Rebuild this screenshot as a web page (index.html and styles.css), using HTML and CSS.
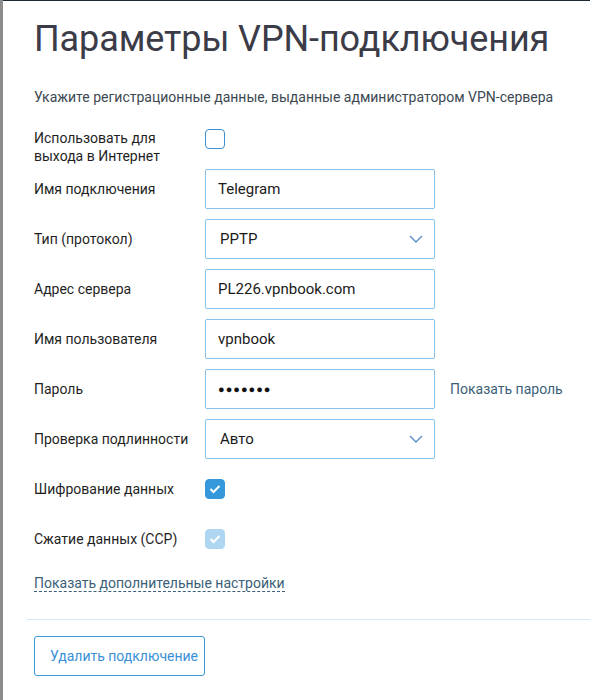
FILE: index.html
```html
<!DOCTYPE html>
<html lang="ru">
<head>
  <meta charset="UTF-8">
  <meta name="viewport" content="width=device-width, initial-scale=1.0">
  <title>Параметры VPN-подключения</title>
  <link rel="stylesheet" href="styles.css">
</head>
<body>
  <div class="panel">
    <h1 class="title">Параметры VPN-подключения</h1>
    <p class="hint">Укажите регистрационные данные, выданные администратором VPN-сервера</p>

    <div class="form">
      <div class="row row-top">
        <label class="label">Использовать для<br>выхода в Интернет</label>
        <span class="check"></span>
      </div>
      <div class="row">
        <label class="label">Имя подключения</label>
        <input class="field" type="text" value="Telegram">
      </div>
      <div class="row">
        <label class="label">Тип (протокол)</label>
        <div class="select">
          <span>PPTP</span>
          <svg class="chevron" width="14" height="8" viewBox="0 0 14 8"><path d="M1 1l6 6 6-6" fill="none" stroke="#5b8fc7" stroke-width="1.4"/></svg>
        </div>
      </div>
      <div class="row">
        <label class="label">Адрес сервера</label>
        <input class="field" type="text" value="PL226.vpnbook.com">
      </div>
      <div class="row">
        <label class="label">Имя пользователя</label>
        <input class="field" type="text" value="vpnbook">
      </div>
      <div class="row">
        <label class="label">Пароль</label>
        <div class="field dots">●●●●●●●</div>
        <a class="link">Показать пароль</a>
      </div>
      <div class="row">
        <label class="label">Проверка подлинности</label>
        <div class="select">
          <span>Авто</span>
          <svg class="chevron" width="14" height="8" viewBox="0 0 14 8"><path d="M1 1l6 6 6-6" fill="none" stroke="#5b8fc7" stroke-width="1.4"/></svg>
        </div>
      </div>
      <div class="row">
        <label class="label">Шифрование данных</label>
        <span class="check checked">
          <svg width="12" height="10" viewBox="0 0 12 10"><path d="M1.5 5l3 3 6-6" fill="none" stroke="#fff" stroke-width="2"/></svg>
        </span>
      </div>
      <div class="row">
        <label class="label">Сжатие данных (CCP)</label>
        <span class="check checked disabled">
          <svg width="12" height="10" viewBox="0 0 12 10"><path d="M1.5 5l3 3 6-6" fill="none" stroke="#fff" stroke-width="2"/></svg>
        </span>
      </div>
    </div>

    <a class="more">Показать дополнительные настройки</a>
    <div class="divider"></div>
    <button class="btn">Удалить подключение</button>
  </div>
</body>
</html>
```

FILE: styles.css
```css
* { box-sizing: border-box; }
body {
  margin: 0;
  padding: 0;
  height: 700px;
  overflow: hidden;
  background: #8c8c8c;
  font-family: Roboto, 'Liberation Sans', sans-serif;
  color: #222;
}
.panel {
  margin-left: 3px;
  height: 700px;
  background: #fff;
  border-top: 1px solid #1d2a33;
  padding: 17px 0 0 31px;
}
.title {
  margin: 0;
  font-size: 36px;
  font-weight: 400;
  line-height: 43px;
  letter-spacing: -0.1px;
  color: #3b3c48;
}
.hint {
  margin: 26px 0 22px;
  font-size: 14px;
  line-height: 20px;
  color: #3d4852;
}
.row {
  display: flex;
  align-items: center;
  min-height: 40px;
  margin-bottom: 10px;
}
.row-top {
  align-items: flex-start;
  min-height: 36px;
  margin-bottom: 4px;
}
.label {
  width: 171px;
  font-size: 14px;
  line-height: 18px;
  color: #1f1f1f;
}
.field,
.select {
  width: 230px;
  height: 40px;
  border: 1px solid #85c1e9;
  border-radius: 2px;
  padding: 0 12px;
  font-family: inherit;
  font-size: 15px;
  color: #1a1a1a;
  background: #fff;
  outline: none;
}
.select {
  display: flex;
  align-items: center;
  justify-content: space-between;
  padding: 0 11px 0 14px;
}
.dots {
  display: flex;
  align-items: center;
  font-size: 11px;
  letter-spacing: 1px;
  color: #111;
}
.link {
  margin-left: 15px;
  font-size: 14px;
  color: #3b5f78;
  cursor: pointer;
}
.check {
  display: flex;
  align-items: center;
  justify-content: center;
  width: 20px;
  height: 20px;
  border: 1.5px solid #3d8fcf;
  border-radius: 4px;
}
.checked {
  background: #3498db;
  border-color: #3498db;
}
.disabled {
  background: #aed6f1;
  border-color: #aed6f1;
}
.more {
  display: inline-block;
  margin-top: 6px;
  font-size: 14px;
  line-height: 16px;
  color: #3b5f78;
  border-bottom: 1px dashed #3b5f78;
  cursor: pointer;
}
.divider {
  margin: 27px 0 16px -7px;
  border-top: 1px solid #d4eaf7;
}
.btn {
  width: 171px;
  height: 40px;
  padding: 0 0 0 15px;
  text-align: left;
  background: #fff;
  border: 1px solid #3a9ad9;
  border-radius: 3px;
  font-family: inherit;
  font-size: 14px;
  color: #3a90d8;
  cursor: pointer;
}
```
